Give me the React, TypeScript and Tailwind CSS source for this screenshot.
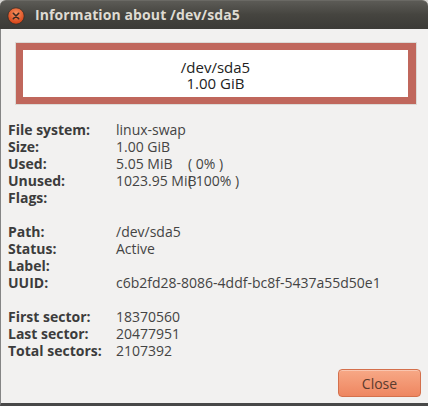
import React from "react";

const rows: Array<[string, React.ReactNode] | null> = [
  ["File system:", "linux-swap"],
  ["Size:", "1.00 GiB"],
  ["Used:", <Pct v="5.05 MiB" p="( 0% )" />],
  ["Unused:", <Pct v="1023.95 MiB" p="( 100% )" />],
  ["Flags:", ""],
  null,
  ["Path:", "/dev/sda5"],
  ["Status:", "Active"],
  ["Label:", ""],
  ["UUID:", "c6b2fd28-8086-4ddf-bc8f-5437a55d50e1"],
  null,
  ["First sector:", "18370560"],
  ["Last sector:", "20477951"],
  ["Total sectors:", "2107392"],
];

function Pct({ v, p }: { v: string; p: string }) {
  return (
    <span className="flex whitespace-nowrap">
      <span className="w-[72px] shrink-0 whitespace-nowrap">{v}</span>
      <span className="whitespace-nowrap">{p}</span>
    </span>
  );
}

export default function App() {
  return (
    <div
      className="w-[428px] h-[406px] flex flex-col bg-[#d6d5d2] overflow-hidden"
      style={{ fontFamily: '"Open Sans", "Noto Sans", sans-serif' }}
    >
      <div className="h-[29px] shrink-0 flex items-center rounded-t-[6px] bg-linear-to-b from-[#5c5b56] via-[#45443f] to-[#3c3b37] border-t border-[#6a6964]">
        <svg width="18" height="18" viewBox="0 0 18 18" className="ml-[7px] mt-[1px]">
          <defs>
            <radialGradient id="cg" cx="50%" cy="35%" r="60%">
              <stop offset="0%" stopColor="#f6915f" />
              <stop offset="100%" stopColor="#d9461a" />
            </radialGradient>
          </defs>
          <circle cx="9" cy="9" r="8.2" fill="url(#cg)" stroke="#2f2e2a" strokeWidth="0.8" />
          <path d="M6.3 6.3 L11.7 11.7 M11.7 6.3 L6.3 11.7" stroke="#3a2a22" strokeWidth="1.6" strokeLinecap="round" />
        </svg>
        <span className="ml-[10px] text-[14px] font-bold text-[#dfdbd2] leading-none tracking-[0.1px]">
          Information about /dev/sda5
        </span>
      </div>
      <div className="flex-1 flex flex-col bg-[#f2f1f0] border-l border-[#858585] border-b-[3px] border-b-[#484848]">
        <div className="ml-[14px] mt-[13px] w-[402px] h-[63px] border border-[#dcdad6] bg-[#c0675c] pt-[7px] pb-[7px] pl-[7px] pr-[8px]">
          <div className="h-full bg-white flex flex-col items-center justify-center pt-[3px] text-[15px] leading-[16px] text-[#222]">
            <span>/dev/sda5</span>
            <span>1.00 GiB</span>
          </div>
        </div>
        <div className="ml-[7px] mt-[16px] grid grid-cols-[108px_1fr] text-[14px] leading-[17px] text-[#3c3c3c]">
          {rows.map((r, i) =>
            r === null ? (
              <div key={i} className="col-span-2 h-[17px]" />
            ) : (
              <React.Fragment key={i}>
                <span className="font-bold whitespace-nowrap">{r[0]}</span>
                <span className="whitespace-nowrap text-[#444]">{r[1]}</span>
              </React.Fragment>
            )
          )}
        </div>
        <div className="mt-auto mb-[6px] mr-[7px] flex justify-end">
          <button className="w-[83px] h-[28px] rounded-[4px] border border-[#d4704c] bg-linear-to-b from-[#f7a886] to-[#ee8660] text-[14px] text-[#5a3b2e] shadow-[inset_0_1px_0_rgba(255,255,255,0.35)]">
            Close
          </button>
        </div>
      </div>
    </div>
  );
}
